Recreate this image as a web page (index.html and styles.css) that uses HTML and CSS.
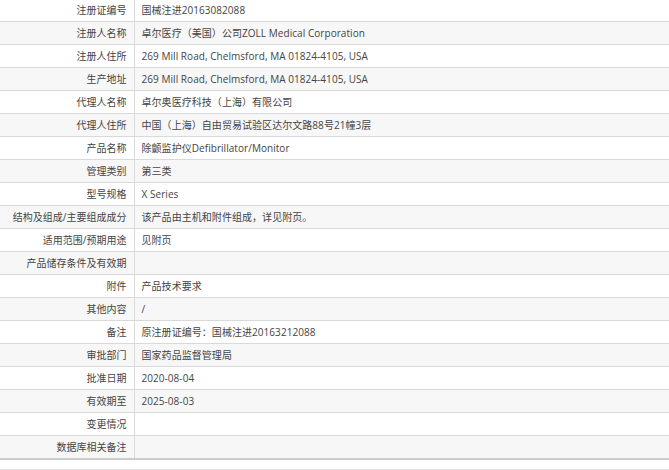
FILE: index.html
```html
<!DOCTYPE html>
<html lang="zh-CN">
<head>
<meta charset="utf-8">
<title>注册证信息</title>
<link rel="stylesheet" href="styles.css">
</head>
<body>
<table class="info">
  <tbody>
    <tr class="first"><td class="label">注册证编号</td><td class="value">国械注进20163082088</td></tr>
    <tr><td class="label">注册人名称</td><td class="value">卓尔医疗（美国）公司ZOLL Medical Corporation</td></tr>
    <tr><td class="label">注册人住所</td><td class="value">269 Mill Road, Chelmsford, MA 01824-4105, USA</td></tr>
    <tr><td class="label">生产地址</td><td class="value">269 Mill Road, Chelmsford, MA 01824-4105, USA</td></tr>
    <tr><td class="label">代理人名称</td><td class="value">卓尔奥医疗科技（上海）有限公司</td></tr>
    <tr><td class="label">代理人住所</td><td class="value">中国（上海）自由贸易试验区达尔文路88号21幢3层</td></tr>
    <tr><td class="label">产品名称</td><td class="value">除颤监护仪Defibrillator/Monitor</td></tr>
    <tr><td class="label">管理类别</td><td class="value">第三类</td></tr>
    <tr><td class="label">型号规格</td><td class="value">X Series</td></tr>
    <tr><td class="label">结构及组成/主要组成成分</td><td class="value">该产品由主机和附件组成，详见附页。</td></tr>
    <tr><td class="label">适用范围/预期用途</td><td class="value">见附页</td></tr>
    <tr><td class="label">产品储存条件及有效期</td><td class="value"></td></tr>
    <tr><td class="label">附件</td><td class="value">产品技术要求</td></tr>
    <tr><td class="label">其他内容</td><td class="value">/</td></tr>
    <tr><td class="label">备注</td><td class="value">原注册证编号：国械注进20163212088</td></tr>
    <tr><td class="label">审批部门</td><td class="value">国家药品监督管理局</td></tr>
    <tr><td class="label">批准日期</td><td class="value">2020-08-04</td></tr>
    <tr><td class="label">有效期至</td><td class="value">2025-08-03</td></tr>
    <tr><td class="label">变更情况</td><td class="value"></td></tr>
    <tr class="last"><td class="label">数据库相关备注</td><td class="value"></td></tr>
  </tbody>
</table>
<div class="after"></div>
</body>
</html>
```

FILE: styles.css
```css
html, body {
  margin: 0;
  padding: 0;
  background: #ffffff;
}
body {
  font-family: "Open Sans", "Noto Sans CJK SC", sans-serif;
  font-size: 10px;
  color: #444444;
}
.info {
  width: 669px;
  border-collapse: collapse;
  table-layout: fixed;
}
.info td {
  height: 22px;
  padding: 0;
  border-bottom: 1px solid #d9d9d9;
  line-height: 22px;
  white-space: nowrap;
  overflow: hidden;
  box-sizing: border-box;
}
.info tr:nth-child(even) td {
  background: #f7f7f7;
}
.info tr.first td {
  height: 21px;
  line-height: 21px;
}
.info tr.last td {
  border-bottom: 2px solid #cccccc;
}
.label {
  width: 134px;
  text-align: right;
  padding-right: 7px !important;
  border-right: 1px solid #d9d9d9;
}
.value {
  padding-left: 7px !important;
  letter-spacing: 0.05px;
}
.after {
  margin-top: 9px;
  border-top: 1px solid #e6e6e6;
  height: 10px;
}
```
